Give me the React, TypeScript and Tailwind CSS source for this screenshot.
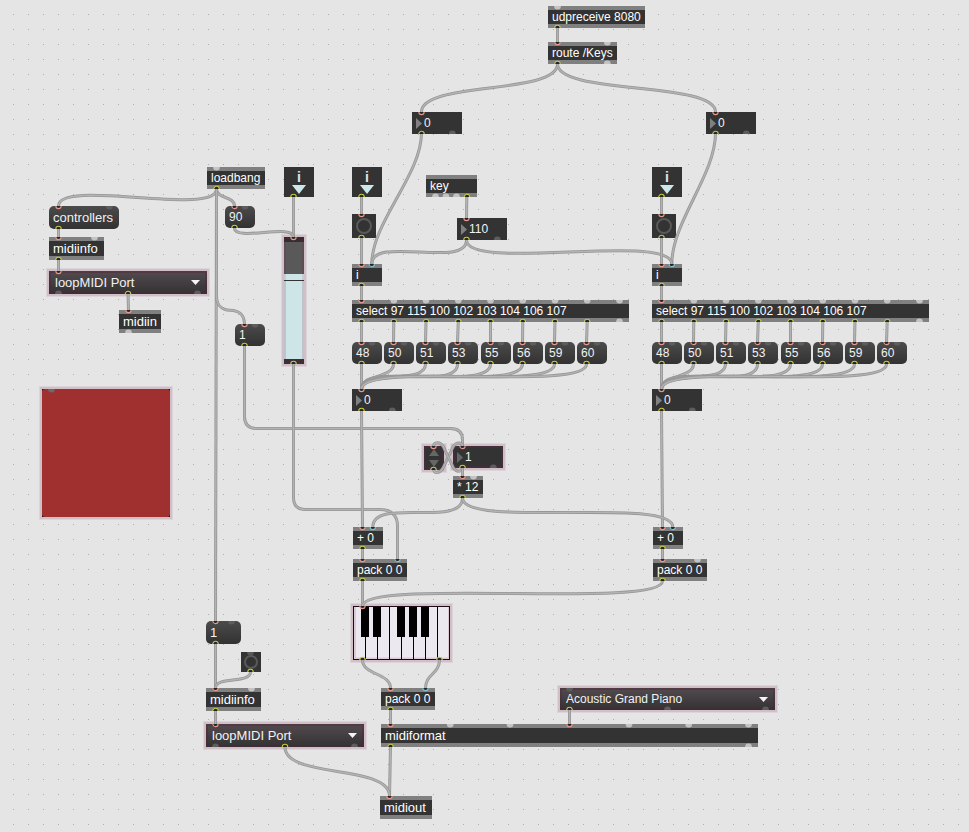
import React from "react";

type Kind = "object" | "message" | "number" | "menu";

interface Box {
  kind: Kind;
  x: number;
  y: number;
  w: number;
  h?: number;
  text: string;
  ins?: string;
  outs?: string;
  selected?: boolean;
}

/* Port lists are "offset:state" pairs: a = wired, b = wired (cold), o = idle */
const keyNotes = ["48", "50", "51", "53", "55", "56", "59", "60"];
const noteOffsets = [0, 32, 64, 96, 129, 161, 193, 225];
const selectPorts = [9.5, 41.8, 74, 106.3, 138.5, 170.8, 203, 235.2, 267.5];

const voice = (ox: number): Box[] => [
  { kind: "object", x: ox, y: 264, w: 30, text: "i", ins: "9.5:a 19.8:b", outs: "9.5:a" },
  {
    kind: "object",
    x: ox,
    y: 300,
    w: 277,
    text: "select 97 115 100 102 103 104 106 107",
    ins: selectPorts.map((p, i) => `${p}:${i === 0 ? "a" : "o"}`).join(" "),
    outs: selectPorts.map((p, i) => `${p}:${i === 8 ? "o" : "a"}`).join(" "),
  },
  ...keyNotes.map(
    (n, i): Box => ({ kind: "message", x: ox + noteOffsets[i], y: 342, w: 29.5, text: n, ins: "9.5:a 20:o", outs: "9.5:a" })
  ),
  { kind: "number", x: ox, y: 389, w: 50, text: "0", ins: "9.5:a", outs: "9.5:a 40.3:o" },
  { kind: "object", x: ox + 1, y: 527, w: 30, text: "+ 0", ins: "9.5:a 19.8:b", outs: "9.5:a" },
];

const boxes: Box[] = [
  { kind: "object", x: 548, y: 6, w: 97, text: "udpreceive 8080", ins: "9.5:o", outs: "9.5:a" },
  { kind: "object", x: 548, y: 42, w: 69, text: "route /Keys", ins: "9.5:a 59.3:o", outs: "9.5:a 59.3:o" },
  { kind: "number", x: 412, y: 112, w: 50, text: "0", ins: "9.5:a", outs: "9.5:a 40.3:o" },
  { kind: "number", x: 706, y: 112, w: 50, text: "0", ins: "9.5:a", outs: "9.5:a 40.3:o" },
  { kind: "object", x: 207, y: 167, w: 58, text: "loadbang", ins: "9.5:o", outs: "9.5:a" },
  { kind: "message", x: 49, y: 206, w: 70, h: 23, text: "controllers", ins: "9.5:a 60.3:o", outs: "9.5:a" },
  { kind: "message", x: 225, y: 206, w: 29.5, text: "90", ins: "9.5:a 20:o", outs: "9.5:a" },
  { kind: "object", x: 49, y: 237, w: 55, h: 23, text: "midiinfo", ins: "9.5:a 45.5:o", outs: "9.5:a" },
  { kind: "menu", x: 49, y: 271, w: 158, h: 23, text: "loopMIDI Port", ins: "9.5:a", outs: "9.5:o 79:a 148.5:o", selected: true },
  { kind: "object", x: 119, y: 310, w: 42, h: 23, text: "midiin", ins: "9.5:a", outs: "9.5:o" },
  { kind: "message", x: 235, y: 324, w: 29.5, text: "1", ins: "9.5:a 20:o", outs: "9.5:a" },
  { kind: "object", x: 426, y: 175, w: 51, text: "key", outs: "9.5:o 20:o 30.5:o 41:a" },
  { kind: "number", x: 457, y: 218, w: 50, text: "110", ins: "9.5:a", outs: "9.5:a 40.3:o" },
  ...voice(352),
  ...voice(652),
  { kind: "object", x: 353, y: 559, w: 54, text: "pack 0 0", ins: "9.5:a 44.5:b", outs: "9.5:a" },
  { kind: "object", x: 653, y: 559, w: 54, text: "pack 0 0", ins: "9.5:a 44.5:o", outs: "9.5:a" },
  { kind: "number", x: 453, y: 446, w: 50, text: "1", ins: "9.5:a", outs: "9.5:a 40.3:o", selected: true },
  { kind: "object", x: 453, y: 476, w: 30, text: "* 12", ins: "9.5:a 20.5:o", outs: "9.5:a" },
  { kind: "object", x: 381, y: 688, w: 54, text: "pack 0 0", ins: "9.5:a 44.5:b", outs: "9.5:a" },
  {
    kind: "object",
    x: 381,
    y: 724,
    w: 377,
    h: 23,
    text: "midiformat",
    ins: "9.5:a 69.2:o 129:o 188.5:a 248:o 307.7:o 367.5:o",
    outs: "9.5:a 367.5:o",
  },
  { kind: "object", x: 380, y: 796, w: 52, h: 23, text: "midiout", ins: "9.5:a" },
  { kind: "menu", x: 560, y: 688, w: 215, text: "Acoustic Grand Piano", ins: "9.5:o", outs: "9.5:a 107.5:o 205.5:o", selected: true },
  { kind: "message", x: 206, y: 621, w: 35, h: 23, text: "1", ins: "9.5:a 25.5:o", outs: "9.5:a" },
  { kind: "object", x: 206, y: 688, w: 55, h: 23, text: "midiinfo", ins: "9.5:a 45.5:o", outs: "9.5:a" },
  { kind: "menu", x: 206, y: 724, w: 158, h: 23, text: "loopMIDI Port", ins: "9.5:a", outs: "9.5:o 79:a 148.5:o", selected: true },
];

const inletButtons = [
  [284, 167],
  [352, 167],
  [652, 167],
];

const bangs = [
  { x: 352, y: 214, s: 24 },
  { x: 652, y: 214, s: 24 },
  { x: 241, y: 652, s: 20 },
];

const curve = (x0: number, y0: number, x1: number, y1: number, k: number) =>
  `M${x0} ${y0}C${x0} ${y0 + k} ${x1} ${y1 - k} ${x1} ${y1}`;
const line = (x0: number, y0: number, x1: number, y1: number) => `M${x0} ${y0}L${x1} ${y1}`;

const voiceCords = (ox: number): string[] => [
  line(ox + 9.5, 196, ox + 9.5, 215),
  line(ox + 9.5, 237, ox + 9.5, 265),
  line(ox + 9.5, 285, ox + 9.5, 301),
  ...noteOffsets.map((n, i) => line(ox + selectPorts[i], 321, ox + n + 9.5, 343)),
  ...noteOffsets.map((n) => curve(ox + n + 9.5, 364, ox + 9.5, 389, Math.min(28, 6 + n * 0.25))),
  line(ox + 9.5, 410, ox + 10.5, 528),
  line(ox + 10.5, 548, ox + 10.5, 560),
];

const cords: string[] = [
  line(557.5, 27, 557.5, 43),
  curve(557.5, 64, 421.5, 112, 31),
  curve(557.5, 64, 715.5, 112, 31),
  curve(421.5, 133, 371.8, 264, 42),
  curve(715.5, 133, 671.8, 264, 42),
  curve(216.5, 189, 58.5, 206, 28),
  curve(216.5, 189, 234.5, 206, 10),
  line(216.5, 188, 215.5, 622),
  "M216.5 189V296C216.5 304 221 310 230 310.3C240 310.5 244.5 315 244.5 325",
  line(58.5, 228, 58.5, 238),
  line(58.5, 259, 58.5, 272),
  line(128, 293, 128.5, 311),
  line(293.5, 196, 293.5, 238),
  curve(234.5, 228, 293.5, 237, 14),
  "M244.5 345V416.5Q244.5 428.5 256.5 428.5H450.5Q462.5 428.5 462.5 440V447",
  "M293.5 363V497.5Q293.5 509.5 305.5 509.5H380Q397.5 510 397.5 526V560",
  line(466.8, 196, 466.5, 219),
  curve(466.5, 240, 371.8, 264, 29),
  curve(466.5, 240, 671.8, 264, 32),
  ...voiceCords(352),
  ...voiceCords(652),
  "M433.5 469C433.5 474 440 474 443.5 467L453 447C456 441.5 462.5 441.5 462.5 447",
  "M462.5 467C462.5 473 456 472.5 453 467L443.5 447C440 441 433.5 441.5 433.5 447",
  line(462.5, 467, 462.5, 477),
  curve(462.5, 498, 372.8, 527, 30),
  curve(462.5, 498, 672.8, 527, 31),
  line(362.5, 580, 362.5, 607),
  curve(662.5, 581, 362.5, 606, 28),
  curve(362.5, 660, 390.5, 688, 15),
  curve(439.5, 660, 425.5, 688, 14),
  line(390.5, 709, 390.5, 725),
  line(390.5, 746, 389.5, 797),
  curve(285, 747, 389.5, 796, 32),
  line(569.5, 709, 569.5, 725),
  line(215.5, 643, 215.5, 689),
  curve(250.5, 672, 215.5, 688, 12),
  line(215.5, 710, 215.5, 725),
];

function Selection({ x, y, w, h }: { x: number; y: number; w: number; h: number }) {
  return (
    <div
      className="absolute border-2 border-[#cfbfc7] shadow-[0_0_0_1px_#ddd3d8]"
      style={{ left: x - 2, top: y - 2, width: w + 4, height: h + 4 }}
    />
  );
}

function PatchBox({ b }: { b: Box }) {
  const h = b.h ?? 22;
  const frame = { left: b.x, top: b.y, width: b.w, height: h };
  const size = h === 23 ? "text-[13px]" : "text-[12px]";
  if (b.kind === "object") {
    return (
      <div
        className={`absolute flex items-center border-y-4 border-[#808080] bg-[#333333] pl-1 leading-none text-white whitespace-pre ${size}`}
        style={frame}
      >
        <span>{b.text}</span>
      </div>
    );
  }
  if (b.kind === "message") {
    return (
      <div
        className={`absolute flex items-center rounded-[5px] bg-linear-to-b from-[#4b4b4b] to-[#323232] pl-1 leading-none text-[#f2f2f2] ${size}`}
        style={frame}
      >
        <span>{b.text}</span>
      </div>
    );
  }
  if (b.kind === "number") {
    return (
      <>
        {b.selected && <Selection x={b.x} y={b.y} w={b.w} h={h} />}
        <div
          className={`absolute flex items-center gap-[2px] bg-[#333333] pl-1 text-[12px] leading-none text-[#f2f2f2] ${
            b.selected ? "shadow-[inset_0_0_0_2px_#422f39]" : ""
          }`}
          style={frame}
        >
          <svg className="h-[11px] w-[6px] shrink-0" viewBox="0 0 6 11">
            <path d="M0 0L6 5.5L0 11Z" fill={b.selected ? "#666" : "#808080"} />
          </svg>
          <span>{b.text}</span>
        </div>
      </>
    );
  }
  return (
    <>
      <Selection x={b.x} y={b.y} w={b.w} h={h} />
      <div
        className={`absolute flex items-center justify-between bg-linear-to-b from-[#524b4f] to-[#343233] pr-[7px] pl-[6px] leading-none text-[#f2f2f2] shadow-[inset_0_0_0_2px_rgba(80,36,56,0.42)] ${size}`}
        style={frame}
      >
        <span>{b.text}</span>
        <svg className="h-[5px] w-[9px]" viewBox="0 0 9 5">
          <path d="M0 0H9L4.5 5Z" fill="#f5f5f5" />
        </svg>
      </div>
    </>
  );
}

function Inlet({ x, y, color = "#e89a8c" }: { x: number; y: number; color?: string }) {
  return (
    <path
      d={`M${x - 2.6} ${y}V${y + 0.3}A2.6 2.3 0 0 0 ${x + 2.6} ${y + 0.3}V${y}`}
      fill="#262626"
      stroke={color}
      strokeWidth="1.1"
    />
  );
}

function Outlet({ x, y }: { x: number; y: number }) {
  return (
    <path
      d={`M${x - 2.7} ${y}V${y - 0.2}A2.7 2.5 0 0 1 ${x + 2.7} ${y - 0.2}V${y}`}
      fill="#262626"
      stroke="#c3cb3c"
      strokeWidth="1.1"
    />
  );
}

function Ports({ b }: { b: Box }) {
  const h = b.h ?? 22;
  const idle = b.kind === "object" ? "#c4c4c4" : "#5f5c5e";
  const parse = (s?: string) => (s ? s.split(" ").map((p) => p.split(":")) : []);
  return (
    <g>
      {parse(b.ins).map(([o, s]) => {
        const x = b.x + Number(o);
        return s === "o" ? (
          <path key={o} d={`M${x - 3.4} ${b.y}A3.4 3.6 0 0 0 ${x + 3.4} ${b.y}Z`} fill={idle} />
        ) : (
          <Inlet key={o} x={x} y={b.y} color={s === "b" ? "#7cc4d4" : undefined} />
        );
      })}
      {parse(b.outs).map(([o, s]) => {
        const x = b.x + Number(o);
        const y = b.y + h;
        return s === "o" ? (
          <path key={o} d={`M${x - 3.4} ${y}A3.4 3.4 0 0 1 ${x + 3.4} ${y}Z`} fill={idle} />
        ) : (
          <Outlet key={o} x={x} y={y} />
        );
      })}
    </g>
  );
}

function Slider() {
  return (
    <>
      <Selection x={284} y={237} w={20} h={127} />
      <div className="absolute top-[237px] left-[284px] flex h-[127px] w-[20px] flex-col">
        <div className="h-[5px] bg-[#3a2c32]" />
        <div className="h-[32px] bg-[#595959] shadow-[inset_2px_0_0_#5d4e55,inset_-2px_0_0_#5d4e55]" />
        <div className="h-[6px] bg-[#cde5e7] shadow-[inset_2px_0_0_#c5cdd3,inset_-2px_0_0_#c5cdd3]" />
        <div className="h-px bg-[#333333]" />
        <div className="flex-1 bg-[#cde5e7] shadow-[inset_2px_0_0_#c1c3cc,inset_-2px_0_0_#c1c3cc]" />
        <div className="h-[5px] bg-[#3d2f36]" />
      </div>
    </>
  );
}

function Keyboard() {
  return (
    <>
      <Selection x={353} y={606} w={97} h={54} />
      <svg className="absolute top-[606px] left-[353px] h-[54px] w-[97px]" viewBox="0 0 97 54">
        <rect width="97" height="54" fill="#1c0b14" />
        <rect x="1" y="1" width="95" height="52" fill="#ddc9d3" />
        <rect x="3" y="1" width="92" height="50.5" fill="#ebe9ef" />
        {[12, 24, 36, 48, 60, 72, 84].map((x) => (
          <rect key={x} x={x} y="1" width="1" height="52" fill="#000" />
        ))}
        {[8, 20, 44, 56, 68].map((x) => (
          <rect key={x} x={x} y="1" width="8" height="30" fill="#000" />
        ))}
      </svg>
    </>
  );
}

export default function App() {
  return (
    <div className="relative h-[832px] w-[969px] overflow-hidden bg-[#e5e5e5] font-['Liberation_Sans',Arial,sans-serif]">
      <svg className="absolute inset-0 h-full w-full">
        <defs>
          <pattern id="grid" x="13" y="14" width="15" height="15" patternUnits="userSpaceOnUse">
            <rect width="1" height="1" fill="#aeaeae" />
          </pattern>
        </defs>
        <rect width="969" height="832" fill="url(#grid)" />
      </svg>

      <Selection x={42} y={389} w={128} h={128} />
      <div className="absolute top-[389px] left-[42px] h-[128px] w-[128px] bg-[#241318]">
        <div className="h-full w-full rounded-[3px] bg-[#a03030]" />
      </div>

      <Slider />
      <Keyboard />

      {boxes.map((b, i) => (
        <PatchBox key={i} b={b} />
      ))}

      {inletButtons.map(([x, y]) => (
        <div
          key={x}
          className="absolute flex h-[30px] w-[30px] flex-col items-center bg-[#333333] pt-[3px] text-[14px] leading-[14px] font-bold text-[#e4e4e4]"
          style={{ left: x, top: y }}
        >
          <span>i</span>
          <svg className="mt-px h-[9px] w-[14px]" viewBox="0 0 14 9">
            <path d="M0 0H14L7 9Z" fill="#cde8ea" />
          </svg>
        </div>
      ))}

      {bangs.map((g) => (
        <div
          key={`${g.x}-${g.y}`}
          className="absolute flex items-center justify-center bg-[#333333]"
          style={{ left: g.x, top: g.y, width: g.s, height: g.s }}
        >
          <div className="h-[68%] w-[68%] rounded-full border-2 border-[#595959]" />
        </div>
      ))}

      <Selection x={424} y={446} w={20} h={24} />
      <div className="absolute top-[446px] left-[424px] flex h-[24px] w-[20px] items-center justify-center bg-[#333333] shadow-[inset_0_0_0_2px_#422f39]">
        <svg className="h-[18px] w-[10px]" viewBox="0 0 10 18">
          <path d="M5 0L10 7H0ZM0 11H10L5 18Z" fill="#666" />
        </svg>
      </div>

      <svg className="absolute inset-0 h-full w-full" fill="none">
        {cords.map((d, i) => (
          <g key={i}>
            <path d={d} stroke="#969696" strokeWidth="3" />
            <path d={d} stroke="#b3b3b3" strokeWidth="1.4" />
          </g>
        ))}
        {boxes.map((b, i) => (
          <Ports key={i} b={b} />
        ))}
        {inletButtons.map(([x, y]) => (
          <Outlet key={x} x={x + 9.5} y={y + 30} />
        ))}
        <Inlet x={361.5} y={214} />
        <Outlet x={361.5} y={238} />
        <Inlet x={661.5} y={214} />
        <Outlet x={661.5} y={238} />
        <path d="M247.2 652A3.3 3.6 0 0 0 253.8 652Z" fill="#595959" />
        <Outlet x={250.5} y={672} />
        <Inlet x={293.5} y={237} />
        <Outlet x={293.5} y={364} />
        <Inlet x={433.5} y={446} />
        <Outlet x={433.5} y={470} />
        <Inlet x={362.5} y={606} />
        <Outlet x={362.5} y={660} />
        <Outlet x={439.5} y={660} />
        <path d="M48.2 389A3.3 3.6 0 0 0 54.8 389Z" fill="#6b6b6b" />
      </svg>
    </div>
  );
}
